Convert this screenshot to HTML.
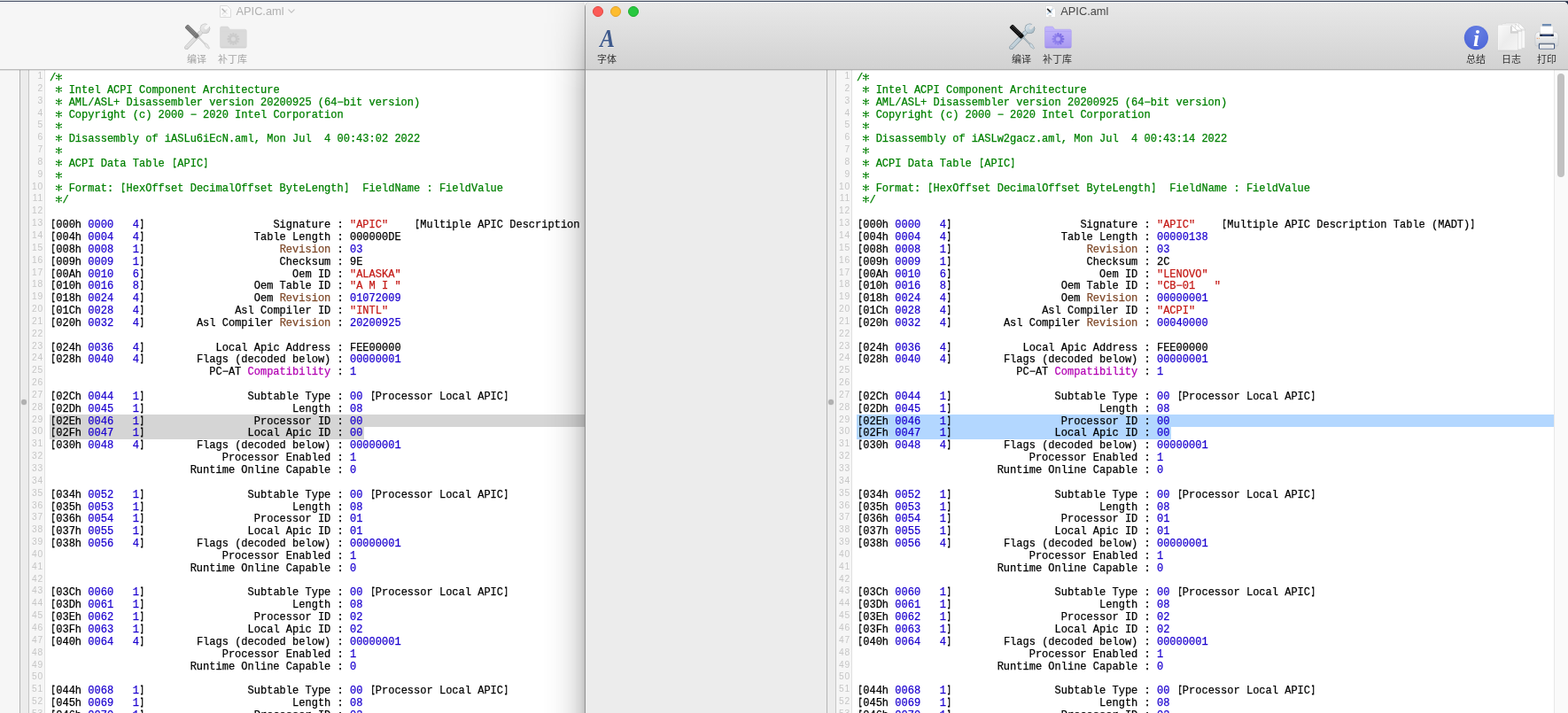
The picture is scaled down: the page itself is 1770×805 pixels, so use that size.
<!DOCTYPE html>
<html><head><meta charset="utf-8"><title>APIC.aml</title>
<style>
html,body{margin:0;padding:0}
body{width:1770px;height:805px;overflow:hidden;position:relative;background:#fff;font-family:"Liberation Sans",sans-serif}
div,pre,svg{position:absolute;box-sizing:border-box}
svg{overflow:visible}
.top0{left:0;top:0;width:1770px;height:1px;background:#d6d9dc}
.top1{left:0;top:1px;width:1770px;height:1px;background:linear-gradient(90deg,#485167,#3e485c)}
/* windows */
#lw{left:0;top:2px;width:660px;height:803px;overflow:hidden;background:#f6f6f6;will-change:transform}
#rwb{left:660px;top:2px;width:1110px;height:803px;background:#929292;border-radius:6px 0 0 0}
#rwk{left:1762px;top:2px;width:8px;height:8px;background:#0f1b38}
#rw{left:661px;top:2px;width:1109px;height:803px;overflow:hidden;background:#ececec;border-radius:5px 5px 0 0}
#shadow{left:612px;top:2px;width:48px;height:803px;background:linear-gradient(90deg,rgba(0,0,0,0) 0,rgba(0,0,0,.01) 25%,rgba(0,0,0,.04) 50%,rgba(0,0,0,.095) 74%,rgba(0,0,0,.17) 92%,rgba(0,0,0,.24) 100%);-webkit-mask-image:linear-gradient(180deg,rgba(0,0,0,.3) 0,rgba(0,0,0,.8) 60px,#000 100px);mask-image:linear-gradient(180deg,rgba(0,0,0,.3) 0,rgba(0,0,0,.8) 60px,#000 100px)}
.tb{left:0;top:0;height:76px;width:100%}
#lw .tb{background:#f6f6f6;border-top:1px solid #fdfdfd}
#rw .tb{background:linear-gradient(#e8e8e8,#d2d2d2);border-top:1px solid #f5f5f5}
.tbline{left:0;top:76px;width:100%;height:1px}
#lw .tbline{background:#bcbcbc}
.tbline2{left:0;top:77px;width:100%;height:1px;background:rgba(0,0,0,.09);z-index:3}
#rw .tbline{background:#b0b0b0}
.title{top:3.3px;height:16px;line-height:16px;font-size:12.8px;white-space:nowrap}
/* editor */
.ed{top:77px;height:726px;background:#fff;overflow:hidden}
.vl{top:77px;width:1px;height:726px}
.strip{top:77px;width:9px;height:726px;background:#ececec}
.gut{top:77px;width:18px;height:726px;background:#f6f6f6;border-right:1px solid #e0e0e0}
.dot{width:6px;height:6px;border-radius:3px;background:radial-gradient(#b4b4b4,#a8a8a8);box-shadow:0 0 1px #999}
pre{margin:0;font-family:"Liberation Mono",monospace;font-size:12.03px;line-height:13.84px;color:#000;white-space:pre}
pre.code{left:5.3px;top:3px;-webkit-text-stroke:.25px;will-change:transform}
.a{position:static;display:inline-block;vertical-align:-1px;width:7.22px;height:9px}
pre.nums{font-family:"Liberation Sans",sans-serif;font-size:10.2px;letter-spacing:.8px;color:#c6c6c6;text-align:right;width:30px;top:76.7px;will-change:transform}
.g{color:#008000}.r{color:#c41a16}.n{color:#1c00cf}.b{color:#7f4a2a}.m{color:#b300b3}
.k,.j{display:inline-block;-webkit-text-stroke:.8px}
.k{transform:translate(.56px,-.9px) scale(.58,.975)}
.j{transform:translate(-.35px,-.9px) scale(.58,.975)}
.sel{height:13.84px}
.lbl{overflow:visible}
.lbl text{font-family:"Liberation Sans","Noto Sans CJK SC",sans-serif;font-size:1000px}
.tl{top:4.6px;width:12px;height:12px;border-radius:6px}
</style></head><body>
<div class="top0"></div><div class="top1"></div>

<!-- ================= LEFT (inactive) WINDOW ================= -->
<div id="lw">
  <div class="tb"></div><div class="tbline"></div><div class="tbline2"></div>
  <!-- title -->
  <svg style="left:248px;top:4px" width="13" height="14" viewBox="0 0 13 14"><path d="M.5.5h8l4 4v9h-12z" fill="#fafafa" stroke="#dcdcdc"/><path d="M3 10l5-5" stroke="#e2e2e2" stroke-width="1.5" stroke-linecap="round"/><path d="M3 4.2l3.3 3.3" stroke="#b9b9b9" stroke-width="1.6" stroke-linecap="round"/><path d="M6.3 7.5l2 2.2" stroke="#dcdcdc" stroke-width="1" stroke-linecap="round"/><rect x="4.2" y="11.4" width="3" height=".9" fill="#e0e0e0"/></svg>
  <div class="title" style="left:266.5px;color:#b1b1b1">APIC.aml</div>
  <svg style="left:325px;top:7.8px" width="8" height="5" viewBox="0 0 8 5"><path d="M.5.6l3.5 3.6 3.5-3.6" fill="none" stroke="#c0c0c0" stroke-width="1.1"/></svg>
  <!-- toolbar icons (disabled look) -->
  <svg style="left:206.5px;top:23.3px;opacity:.55;filter:grayscale(1)" width="32" height="32" viewBox="0 0 32 32"><use href="#tools"/></svg>
  <svg style="left:246.5px;top:22.3px" width="32" height="32" viewBox="0 0 32 32"><use href="#folderg"/></svg>
  <!-- editor -->
  <div class="vl" style="left:22px;background:#b4b4b4"></div>
  <div class="strip" style="left:23px"></div>
  <div class="dot" style="left:24px;top:449px"></div>
  <div class="vl" style="left:32px;background:#c6c6c6"></div>
  <div class="gut" style="left:33px"></div>
  <pre class="nums" style="left:19px">1
2
3
4
5
6
7
8
9
10
11
12
13
14
15
16
17
18
19
20
21
22
23
24
25
26
27
28
29
30
31
32
33
34
35
36
37
38
39
40
41
42
43
44
45
46
47
48
49
50
51
52
53
54</pre>
  <div class="ed" style="left:51px;width:609px">
    <div class="sel" style="left:5px;top:389.2px;width:700px;background:#d5d5d5"></div>
    <div class="sel" style="left:5px;top:403.04px;width:354.5px;background:#d5d5d5"></div>
    <pre class="code"><span class="g">/<svg class="a" viewBox="-3.61 -8 7.22 9"><use href="#ast"/></svg></span>
<span class="g"> <svg class="a" viewBox="-3.61 -8 7.22 9"><use href="#ast"/></svg> Intel ACPI Component Architecture</span>
<span class="g"> <svg class="a" viewBox="-3.61 -8 7.22 9"><use href="#ast"/></svg> AML/ASL+ Disassembler version 20200925 (64−bit version)</span>
<span class="g"> <svg class="a" viewBox="-3.61 -8 7.22 9"><use href="#ast"/></svg> Copyright (c) 2000 − 2020 Intel Corporation</span>
<span class="g"> <svg class="a" viewBox="-3.61 -8 7.22 9"><use href="#ast"/></svg> </span>
<span class="g"> <svg class="a" viewBox="-3.61 -8 7.22 9"><use href="#ast"/></svg> Disassembly of iASLu6iEcN.aml, Mon Jul  4 00:43:02 2022</span>
<span class="g"> <svg class="a" viewBox="-3.61 -8 7.22 9"><use href="#ast"/></svg></span>
<span class="g"> <svg class="a" viewBox="-3.61 -8 7.22 9"><use href="#ast"/></svg> ACPI Data Table <span class="k">[</span>APIC<span class="j">]</span></span>
<span class="g"> <svg class="a" viewBox="-3.61 -8 7.22 9"><use href="#ast"/></svg></span>
<span class="g"> <svg class="a" viewBox="-3.61 -8 7.22 9"><use href="#ast"/></svg> Format: <span class="k">[</span>HexOffset DecimalOffset ByteLength<span class="j">]</span>  FieldName : FieldValue</span>
<span class="g"> <svg class="a" viewBox="-3.61 -8 7.22 9"><use href="#ast"/></svg>/</span>

<span class="k">[</span>000h <span class="n">0000</span>   <span class="n">4</span><span class="j">]</span>                    Signature : <span class="r">"APIC"</span>    <span class="k">[</span>Multiple APIC Description Table (MADT)<span class="j">]</span>
<span class="k">[</span>004h <span class="n">0004</span>   <span class="n">4</span><span class="j">]</span>                 Table Length : 000000DE
<span class="k">[</span>008h <span class="n">0008</span>   <span class="n">1</span><span class="j">]</span>                     <span class="b">Revision</span> : <span class="n">03</span>
<span class="k">[</span>009h <span class="n">0009</span>   <span class="n">1</span><span class="j">]</span>                     Checksum : 9E
<span class="k">[</span>00Ah <span class="n">0010</span>   <span class="n">6</span><span class="j">]</span>                       Oem ID : <span class="r">"ALASKA"</span>
<span class="k">[</span>010h <span class="n">0016</span>   <span class="n">8</span><span class="j">]</span>                 Oem Table ID : <span class="r">"A M I "</span>
<span class="k">[</span>018h <span class="n">0024</span>   <span class="n">4</span><span class="j">]</span>                 Oem <span class="b">Revision</span> : <span class="n">01072009</span>
<span class="k">[</span>01Ch <span class="n">0028</span>   <span class="n">4</span><span class="j">]</span>              Asl Compiler ID : <span class="r">"INTL"</span>
<span class="k">[</span>020h <span class="n">0032</span>   <span class="n">4</span><span class="j">]</span>        Asl Compiler <span class="b">Revision</span> : <span class="n">20200925</span>

<span class="k">[</span>024h <span class="n">0036</span>   <span class="n">4</span><span class="j">]</span>           Local Apic Address : FEE00000
<span class="k">[</span>028h <span class="n">0040</span>   <span class="n">4</span><span class="j">]</span>        Flags (decoded below) : <span class="n">00000001</span>
                         PC−AT <span class="m">Compatibility</span> : <span class="n">1</span>

<span class="k">[</span>02Ch <span class="n">0044</span>   <span class="n">1</span><span class="j">]</span>                Subtable Type : <span class="n">00</span> <span class="k">[</span>Processor Local APIC<span class="j">]</span>
<span class="k">[</span>02Dh <span class="n">0045</span>   <span class="n">1</span><span class="j">]</span>                       Length : <span class="n">08</span>
<span class="k">[</span>02Eh <span class="n">0046</span>   <span class="n">1</span><span class="j">]</span>                 Processor ID : <span class="n">00</span>
<span class="k">[</span>02Fh <span class="n">0047</span>   <span class="n">1</span><span class="j">]</span>                Local Apic ID : <span class="n">00</span>
<span class="k">[</span>030h <span class="n">0048</span>   <span class="n">4</span><span class="j">]</span>        Flags (decoded below) : <span class="n">00000001</span>
                           Processor Enabled : <span class="n">1</span>
                      Runtime Online Capable : <span class="n">0</span>

<span class="k">[</span>034h <span class="n">0052</span>   <span class="n">1</span><span class="j">]</span>                Subtable Type : <span class="n">00</span> <span class="k">[</span>Processor Local APIC<span class="j">]</span>
<span class="k">[</span>035h <span class="n">0053</span>   <span class="n">1</span><span class="j">]</span>                       Length : <span class="n">08</span>
<span class="k">[</span>036h <span class="n">0054</span>   <span class="n">1</span><span class="j">]</span>                 Processor ID : <span class="n">01</span>
<span class="k">[</span>037h <span class="n">0055</span>   <span class="n">1</span><span class="j">]</span>                Local Apic ID : <span class="n">01</span>
<span class="k">[</span>038h <span class="n">0056</span>   <span class="n">4</span><span class="j">]</span>        Flags (decoded below) : <span class="n">00000001</span>
                           Processor Enabled : <span class="n">1</span>
                      Runtime Online Capable : <span class="n">0</span>

<span class="k">[</span>03Ch <span class="n">0060</span>   <span class="n">1</span><span class="j">]</span>                Subtable Type : <span class="n">00</span> <span class="k">[</span>Processor Local APIC<span class="j">]</span>
<span class="k">[</span>03Dh <span class="n">0061</span>   <span class="n">1</span><span class="j">]</span>                       Length : <span class="n">08</span>
<span class="k">[</span>03Eh <span class="n">0062</span>   <span class="n">1</span><span class="j">]</span>                 Processor ID : <span class="n">02</span>
<span class="k">[</span>03Fh <span class="n">0063</span>   <span class="n">1</span><span class="j">]</span>                Local Apic ID : <span class="n">02</span>
<span class="k">[</span>040h <span class="n">0064</span>   <span class="n">4</span><span class="j">]</span>        Flags (decoded below) : <span class="n">00000001</span>
                           Processor Enabled : <span class="n">1</span>
                      Runtime Online Capable : <span class="n">0</span>

<span class="k">[</span>044h <span class="n">0068</span>   <span class="n">1</span><span class="j">]</span>                Subtable Type : <span class="n">00</span> <span class="k">[</span>Processor Local APIC<span class="j">]</span>
<span class="k">[</span>045h <span class="n">0069</span>   <span class="n">1</span><span class="j">]</span>                       Length : <span class="n">08</span>
<span class="k">[</span>046h <span class="n">0070</span>   <span class="n">1</span><span class="j">]</span>                 Processor ID : <span class="n">03</span>
<span class="k">[</span>047h <span class="n">0071</span>   <span class="n">1</span><span class="j">]</span>                Local Apic ID : <span class="n">03</span></pre>
  </div>
  <svg class="lbl" style="left:210.8px;top:59.3px" width="22" height="11" viewBox="0 -880 2000 1000" fill="#a4a4a4"><text x="0" y="0">编译</text></svg><svg class="lbl" style="left:246.1px;top:59.3px" width="33" height="11" viewBox="0 -880 3000 1000" fill="#a4a4a4"><text x="0" y="0">补丁库</text></svg>
</div>
<div id="shadow"></div>

<!-- ================= RIGHT (active) WINDOW ================= -->
<div id="rwb"></div><div id="rwk"></div>
<div id="rw">
  <div class="tb"></div><div class="tbline"></div><div class="tbline2"></div>
</div>
<div id="rwc" style="left:0;top:2px;width:1770px;height:803px;overflow:hidden;will-change:transform">
  <div class="tl" style="left:669px;background:#fc5b57;border:.5px solid #e2463f"></div>
  <div class="tl" style="left:689px;background:#fdbc2e;border:.5px solid #e0a028"></div>
  <div class="tl" style="left:709px;background:#28c840;border:.5px solid #1aab29"></div>
  <svg style="left:1179.5px;top:4px" width="13" height="14" viewBox="0 0 13 14"><path d="M.5.5h7.5l3.5 3.5v9.5h-11z" fill="#fff" stroke="#d6d6d6" stroke-width=".6"/><path d="M8 .5v3.5h3.5" fill="#f0f0f0" stroke="#d0d0d0" stroke-width=".5"/><path d="M2.3 9.8l5.4-5.2" stroke="#bcd3e6" stroke-width="1.6" stroke-linecap="round"/><path d="M2.6 4.4l3.3 3.2" stroke="#2b2b2b" stroke-width="1.7" stroke-linecap="round"/><path d="M5.9 7.6l2.2 2.2" stroke="#bcd3e6" stroke-width="1" stroke-linecap="round"/><rect x="3.6" y="11.5" width="3.4" height=".9" fill="#b5b5b5"/></svg>
  <div class="title" style="left:1197.3px;color:#484848">APIC.aml</div>
  <!-- font icon -->
  <div style="left:673.5px;top:27px;width:24px;height:29px;transform-origin:100% 50%;transform:scaleX(.86);font-family:'Liberation Serif',serif;font-style:italic;font-weight:bold;font-size:29px;line-height:29px;color:#3f5a8c;text-shadow:0 1px 0 rgba(255,255,255,.5)">A</div>
  <svg style="left:1137.5px;top:23.3px" width="32" height="32" viewBox="0 0 32 32"><use href="#tools"/></svg>
  <svg style="left:1177.5px;top:22.3px" width="32" height="32" viewBox="0 0 32 32"><use href="#folderp"/></svg>
  <svg style="left:1650px;top:23.6px" width="32" height="32" viewBox="0 0 32 32"><use href="#info"/></svg>
  <svg style="left:1690px;top:22px" width="32" height="32" viewBox="0 0 32 32"><use href="#docs"/></svg>
  <svg style="left:1730px;top:22.4px" width="32" height="32" viewBox="0 0 32 32"><use href="#printer"/></svg>
  <svg class="lbl" style="left:674px;top:59.3px" width="22" height="11" viewBox="0 -880 2000 1000" fill="#333333"><text x="0" y="0">字体</text></svg><svg class="lbl" style="left:1141.8px;top:59.3px" width="22" height="11" viewBox="0 -880 2000 1000" fill="#333333"><text x="0" y="0">编译</text></svg><svg class="lbl" style="left:1177.1px;top:59.3px" width="33" height="11" viewBox="0 -880 3000 1000" fill="#333333"><text x="0" y="0">补丁库</text></svg><svg class="lbl" style="left:1654.6px;top:59.3px" width="22" height="11" viewBox="0 -880 2000 1000" fill="#333333"><text x="0" y="0">总结</text></svg><svg class="lbl" style="left:1695.4px;top:59.3px" width="22" height="11" viewBox="0 -880 2000 1000" fill="#333333"><text x="0" y="0">日志</text></svg><svg class="lbl" style="left:1734.6px;top:59.3px" width="22" height="11" viewBox="0 -880 2000 1000" fill="#333333"><text x="0" y="0">打印</text></svg>
  <!-- editor -->
  <div class="vl" style="left:933px;background:#b4b4b4"></div>
  <div class="strip" style="left:934px"></div>
  <div class="dot" style="left:935px;top:449px"></div>
  <div class="vl" style="left:943px;background:#c6c6c6"></div>
  <div class="gut" style="left:944px"></div>
  <pre class="nums" style="left:930px">1
2
3
4
5
6
7
8
9
10
11
12
13
14
15
16
17
18
19
20
21
22
23
24
25
26
27
28
29
30
31
32
33
34
35
36
37
38
39
40
41
42
43
44
45
46
47
48
49
50
51
52
53
54</pre>
  <div class="ed" style="left:962px;width:808px">
    <div class="sel" style="left:5px;top:389.2px;width:787px;background:#b3d7ff"></div>
    <div class="sel" style="left:5px;top:403.04px;width:354.5px;background:#b3d7ff"></div>
    <pre class="code"><span class="g">/<svg class="a" viewBox="-3.61 -8 7.22 9"><use href="#ast"/></svg></span>
<span class="g"> <svg class="a" viewBox="-3.61 -8 7.22 9"><use href="#ast"/></svg> Intel ACPI Component Architecture</span>
<span class="g"> <svg class="a" viewBox="-3.61 -8 7.22 9"><use href="#ast"/></svg> AML/ASL+ Disassembler version 20200925 (64−bit version)</span>
<span class="g"> <svg class="a" viewBox="-3.61 -8 7.22 9"><use href="#ast"/></svg> Copyright (c) 2000 − 2020 Intel Corporation</span>
<span class="g"> <svg class="a" viewBox="-3.61 -8 7.22 9"><use href="#ast"/></svg> </span>
<span class="g"> <svg class="a" viewBox="-3.61 -8 7.22 9"><use href="#ast"/></svg> Disassembly of iASLw2gacz.aml, Mon Jul  4 00:43:14 2022</span>
<span class="g"> <svg class="a" viewBox="-3.61 -8 7.22 9"><use href="#ast"/></svg></span>
<span class="g"> <svg class="a" viewBox="-3.61 -8 7.22 9"><use href="#ast"/></svg> ACPI Data Table <span class="k">[</span>APIC<span class="j">]</span></span>
<span class="g"> <svg class="a" viewBox="-3.61 -8 7.22 9"><use href="#ast"/></svg></span>
<span class="g"> <svg class="a" viewBox="-3.61 -8 7.22 9"><use href="#ast"/></svg> Format: <span class="k">[</span>HexOffset DecimalOffset ByteLength<span class="j">]</span>  FieldName : FieldValue</span>
<span class="g"> <svg class="a" viewBox="-3.61 -8 7.22 9"><use href="#ast"/></svg>/</span>

<span class="k">[</span>000h <span class="n">0000</span>   <span class="n">4</span><span class="j">]</span>                    Signature : <span class="r">"APIC"</span>    <span class="k">[</span>Multiple APIC Description Table (MADT)<span class="j">]</span>
<span class="k">[</span>004h <span class="n">0004</span>   <span class="n">4</span><span class="j">]</span>                 Table Length : <span class="n">00000138</span>
<span class="k">[</span>008h <span class="n">0008</span>   <span class="n">1</span><span class="j">]</span>                     <span class="b">Revision</span> : <span class="n">03</span>
<span class="k">[</span>009h <span class="n">0009</span>   <span class="n">1</span><span class="j">]</span>                     Checksum : 2C
<span class="k">[</span>00Ah <span class="n">0010</span>   <span class="n">6</span><span class="j">]</span>                       Oem ID : <span class="r">"LENOVO"</span>
<span class="k">[</span>010h <span class="n">0016</span>   <span class="n">8</span><span class="j">]</span>                 Oem Table ID : <span class="r">"CB−01   "</span>
<span class="k">[</span>018h <span class="n">0024</span>   <span class="n">4</span><span class="j">]</span>                 Oem <span class="b">Revision</span> : <span class="n">00000001</span>
<span class="k">[</span>01Ch <span class="n">0028</span>   <span class="n">4</span><span class="j">]</span>              Asl Compiler ID : <span class="r">"ACPI"</span>
<span class="k">[</span>020h <span class="n">0032</span>   <span class="n">4</span><span class="j">]</span>        Asl Compiler <span class="b">Revision</span> : <span class="n">00040000</span>

<span class="k">[</span>024h <span class="n">0036</span>   <span class="n">4</span><span class="j">]</span>           Local Apic Address : FEE00000
<span class="k">[</span>028h <span class="n">0040</span>   <span class="n">4</span><span class="j">]</span>        Flags (decoded below) : <span class="n">00000001</span>
                         PC−AT <span class="m">Compatibility</span> : <span class="n">1</span>

<span class="k">[</span>02Ch <span class="n">0044</span>   <span class="n">1</span><span class="j">]</span>                Subtable Type : <span class="n">00</span> <span class="k">[</span>Processor Local APIC<span class="j">]</span>
<span class="k">[</span>02Dh <span class="n">0045</span>   <span class="n">1</span><span class="j">]</span>                       Length : <span class="n">08</span>
<span class="k">[</span>02Eh <span class="n">0046</span>   <span class="n">1</span><span class="j">]</span>                 Processor ID : <span class="n">00</span>
<span class="k">[</span>02Fh <span class="n">0047</span>   <span class="n">1</span><span class="j">]</span>                Local Apic ID : <span class="n">00</span>
<span class="k">[</span>030h <span class="n">0048</span>   <span class="n">4</span><span class="j">]</span>        Flags (decoded below) : <span class="n">00000001</span>
                           Processor Enabled : <span class="n">1</span>
                      Runtime Online Capable : <span class="n">0</span>

<span class="k">[</span>034h <span class="n">0052</span>   <span class="n">1</span><span class="j">]</span>                Subtable Type : <span class="n">00</span> <span class="k">[</span>Processor Local APIC<span class="j">]</span>
<span class="k">[</span>035h <span class="n">0053</span>   <span class="n">1</span><span class="j">]</span>                       Length : <span class="n">08</span>
<span class="k">[</span>036h <span class="n">0054</span>   <span class="n">1</span><span class="j">]</span>                 Processor ID : <span class="n">01</span>
<span class="k">[</span>037h <span class="n">0055</span>   <span class="n">1</span><span class="j">]</span>                Local Apic ID : <span class="n">01</span>
<span class="k">[</span>038h <span class="n">0056</span>   <span class="n">4</span><span class="j">]</span>        Flags (decoded below) : <span class="n">00000001</span>
                           Processor Enabled : <span class="n">1</span>
                      Runtime Online Capable : <span class="n">0</span>

<span class="k">[</span>03Ch <span class="n">0060</span>   <span class="n">1</span><span class="j">]</span>                Subtable Type : <span class="n">00</span> <span class="k">[</span>Processor Local APIC<span class="j">]</span>
<span class="k">[</span>03Dh <span class="n">0061</span>   <span class="n">1</span><span class="j">]</span>                       Length : <span class="n">08</span>
<span class="k">[</span>03Eh <span class="n">0062</span>   <span class="n">1</span><span class="j">]</span>                 Processor ID : <span class="n">02</span>
<span class="k">[</span>03Fh <span class="n">0063</span>   <span class="n">1</span><span class="j">]</span>                Local Apic ID : <span class="n">02</span>
<span class="k">[</span>040h <span class="n">0064</span>   <span class="n">4</span><span class="j">]</span>        Flags (decoded below) : <span class="n">00000001</span>
                           Processor Enabled : <span class="n">1</span>
                      Runtime Online Capable : <span class="n">0</span>

<span class="k">[</span>044h <span class="n">0068</span>   <span class="n">1</span><span class="j">]</span>                Subtable Type : <span class="n">00</span> <span class="k">[</span>Processor Local APIC<span class="j">]</span>
<span class="k">[</span>045h <span class="n">0069</span>   <span class="n">1</span><span class="j">]</span>                       Length : <span class="n">08</span>
<span class="k">[</span>046h <span class="n">0070</span>   <span class="n">1</span><span class="j">]</span>                 Processor ID : <span class="n">03</span>
<span class="k">[</span>047h <span class="n">0071</span>   <span class="n">1</span><span class="j">]</span>                Local Apic ID : <span class="n">03</span></pre>
    <div style="left:792px;top:0;width:16px;height:726px;background:#fafafa;border-left:1px solid #e8e8e8"></div>
    <div style="left:796px;top:3.6px;width:8px;height:117px;border-radius:4px;background:#c1c1c1"></div>
  </div>
</div>

<!-- ================= ICON DEFS ================= -->
<svg width="0" height="0" style="left:-10px;top:-10px">
<defs>
  <linearGradient id="steel" x1="0" y1="0" x2="1" y2="1"><stop offset="0" stop-color="#e4eef4"/><stop offset="1" stop-color="#9fb4c0"/></linearGradient>
  <g id="ast" stroke="#008000" stroke-width="1.15" stroke-linecap="round"><path d="M-.2 -7.5V-.5M-3.2 -5.8L2.8 -2.2M-3.2 -2.2L2.8 -5.8"/></g>
  <g id="tools">
    <mask id="wm"><rect width="32" height="32" fill="#fff"/><g transform="translate(24.5,7.3) rotate(-44)"><rect x="-.4" y="-1.8" width="10" height="3.6" rx="1.6" fill="#000"/></g></mask>
    <g mask="url(#wm)">
      <path d="M19.3 12 L3.7 28.6" stroke="#8597a2" stroke-width="4.9" stroke-linecap="round"/>
      <circle cx="24.5" cy="7.3" r="5.8" fill="#8597a2"/>
      <path d="M19.3 12 L3.7 28.6" stroke="url(#steel)" stroke-width="3.6" stroke-linecap="round"/>
      <circle cx="24.5" cy="7.3" r="5.1" fill="url(#steel)"/>
    </g>
    <circle cx="3.9" cy="28.5" r="1" fill="#eef3f6" stroke="#8597a2" stroke-width=".5"/>
    <path d="M17 17.2 L24.8 25" stroke="#7d8d97" stroke-width="1.7" stroke-linecap="round"/>
    <path d="M17 17.2 L24.8 25" stroke="#d3dfe6" stroke-width=".8" stroke-linecap="round"/>
    <path d="M23.9 24.5 L25 23.7 L27.2 25.1 L29.6 29.4 L28.8 30.2 L25 27.6Z" fill="#cddbe3" stroke="#7d8d97" stroke-width=".5" stroke-linejoin="round"/>
    <g transform="translate(9.8,10.7) rotate(44.5)">
      <rect x="-9.3" y="-2.65" width="18.6" height="5.3" rx="1.4" fill="#0d0d0d"/>
      <rect x="-8.4" y="-1.5" width="12" height=".6" fill="#5e5e5e"/>
      <rect x="-8.4" y=".5" width="12" height=".5" fill="#3d3d3d"/>
      <rect x="4.6" y="-2.65" width=".7" height="5.3" fill="#3a3a3a"/>
    </g>
  </g>
  <linearGradient id="fp" x1="0" y1="0" x2="0" y2="1"><stop offset="0" stop-color="#c3b7fc"/><stop offset="1" stop-color="#a999f1"/></linearGradient>
  <linearGradient id="gp" gradientUnits="userSpaceOnUse" x1="0" y1="-7" x2="0" y2="7"><stop offset="0" stop-color="#7c6ce4"/><stop offset="1" stop-color="#9485ee"/></linearGradient>
  <g id="folderp">
    <path d="M1.5 7.6 Q1.5 6 3.1 6 H9.4 Q10.4 6 11 6.8 L12.6 9.2 H29.6 Q31.3 9.2 31.3 10.8 V28.6 Q31.3 30.2 29.6 30.2 H3.1 Q1.5 30.2 1.5 28.6Z" fill="url(#fp)" stroke="#a596ef" stroke-width=".5"/>
    <path d="M2 11.5 H30.8" stroke="#ad9ef3" stroke-width=".6"/>
    <path d="M2 29.4 H30.8" stroke="#9a8ae8" stroke-width=".9"/>
    <g transform="translate(16.4,20.1)" fill="url(#gp)"><circle r="4.7"/><g id="teeth"><rect x="-1.05" y="-7" width="2.1" height="14" rx=".7" transform="rotate(0)"/><rect x="-1.05" y="-7" width="2.1" height="14" rx=".7" transform="rotate(30)"/><rect x="-1.05" y="-7" width="2.1" height="14" rx=".7" transform="rotate(60)"/><rect x="-1.05" y="-7" width="2.1" height="14" rx=".7" transform="rotate(90)"/><rect x="-1.05" y="-7" width="2.1" height="14" rx=".7" transform="rotate(120)"/><rect x="-1.05" y="-7" width="2.1" height="14" rx=".7" transform="rotate(150)"/></g><circle r="2.5" fill="#b5a7f7"/></g>
  </g>
  <g id="folderg">
    <path d="M1.5 7.6 Q1.5 6 3.1 6 H9.4 Q10.4 6 11 6.8 L12.6 9.2 H29.6 Q31.3 9.2 31.3 10.8 V28.6 Q31.3 30.2 29.6 30.2 H3.1 Q1.5 30.2 1.5 28.6Z" fill="#dadada" stroke="#d2d2d2" stroke-width=".5"/>
    <path d="M2 11.5 H30.8" stroke="#d8d8d8" stroke-width=".6"/>
    <path d="M2 29.4 H30.8" stroke="#d0d0d0" stroke-width=".9"/>
    <g transform="translate(16.4,20.1)" fill="#cbcbcb"><circle r="4.7"/><use href="#teeth"/><circle r="2.5" fill="#dcdcdc"/></g>
  </g>
  <radialGradient id="ib" cx=".55" cy=".25" r=".85"><stop offset="0" stop-color="#667fe3"/><stop offset="1" stop-color="#4a63d6"/></radialGradient>
  <g id="info">
    <circle cx="16.4" cy="16.6" r="13.6" fill="url(#ib)"/>
    <text x="16.6" y="26" text-anchor="middle" font-family="Liberation Serif" font-style="italic" font-weight="bold" font-size="25" fill="#fff">i</text>
  </g>
  <linearGradient id="pg" x1="0" y1="0" x2="1" y2="1"><stop offset="0" stop-color="#fafafa"/><stop offset=".5" stop-color="#ececec"/><stop offset="1" stop-color="#f4f4f4"/></linearGradient>
  <g id="docs">
    <path d="M9.5 2 H24.6 L31.5 8.9 V30.3 H9.5Z" fill="#f8f8f8" stroke="#d0d0d0" stroke-width=".45"/>
    <path d="M24.2 9.6 H31.5 V10.4 H24.2Z" fill="#bdbdbd" opacity=".6"/>
    <path d="M24.6 2 V8.9 H31.5Z" fill="#fff" stroke="#c4c4c4" stroke-width=".45"/>
    <path d="M5.5 3 H20.8 L27.8 10 V31.8 H5.5Z" fill="#f7f7f7" stroke="#cdcdcd" stroke-width=".45"/>
    <path d="M20.3 10.6 H27.8 V11.5 H20.3Z" fill="#b8b8b8" opacity=".65"/>
    <path d="M20.8 3 V10 H27.8Z" fill="#fff" stroke="#bdbdbd" stroke-width=".45"/>
    <path d="M1 4.5 H16.6 L23.6 11.5 V33 H1Z" fill="url(#pg)" stroke="#cbcbcb" stroke-width=".45"/>
    <path d="M15.9 5.2 V12.3 H23.6 V13.4 H15 V5.2Z" fill="#b2b2b2" opacity=".6"/>
    <path d="M16.6 4.5 V11.5 H23.6Z" fill="#fefefe" stroke="#bababa" stroke-width=".5"/>
    <path d="M1.4 4.9 H16.2" stroke="#fff" stroke-width=".7"/><path d="M1.4 4.9 V32.6" stroke="#fcfcfc" stroke-width=".7"/>
    <path d="M1 33.2 H23.6" stroke="#c2c2c2" stroke-width=".5" opacity=".7"/>
  </g>
  <linearGradient id="prb" x1="0" y1="0" x2="0" y2="1"><stop offset="0" stop-color="#fafafa"/><stop offset="1" stop-color="#d4d7da"/></linearGradient>
  <g id="printer">
    <rect x="10.9" y="3" width="10.2" height="3" fill="#6f8db3"/>
    <path d="M8.7 5.6 H23.1 V15 H8.7Z" fill="#fefefe" stroke="#d4d7db" stroke-width=".4"/>
    <path d="M3 16.2 Q3 12.6 6.4 12.2 L8.4 12 V15 H23.4 V12 L25.6 12.2 Q29 12.6 29 16.2 V26.2 Q29 27.9 27.3 27.9 H4.7 Q3 27.9 3 26.2Z" fill="url(#prb)" stroke="#b4b9bf" stroke-width=".5"/>
    <path d="M8.2 14.6 H23.8 V17 H8.2Z" fill="#1d2a45"/>
    <path d="M11 15 H21 V16.6 H11Z" fill="#3d5690" opacity=".8"/>
    <rect x="4.8" y="18.8" width=".9" height="1" fill="#e8662d"/><rect x="6.9" y="18.8" width=".9" height="1" fill="#eda13a"/>
    <rect x="22.8" y="18.8" width="1.1" height=".9" fill="#bfc4c9"/><rect x="25.4" y="18.8" width="1.1" height=".9" fill="#bfc4c9"/>
    <path d="M6.9 26 Q6.9 24.7 8.2 24.7 H23.8 Q25.1 24.7 25.1 26 V30.2 Q25.1 31.5 23.8 31.5 H8.2 Q6.9 31.5 6.9 30.2Z" fill="#43587d"/>
    <path d="M8 25.4 H24 V26.6 H8Z" fill="#8e9296"/>
    <path d="M8 26.4 H24 V30.7 H8Z" fill="#fcfcfc"/>
    <path d="M9.6 28.2 H22.6 M9.6 29.2 H22.6" stroke="#c9c9c9" stroke-width=".5"/>
  </g>
</defs></svg>
</body></html>
